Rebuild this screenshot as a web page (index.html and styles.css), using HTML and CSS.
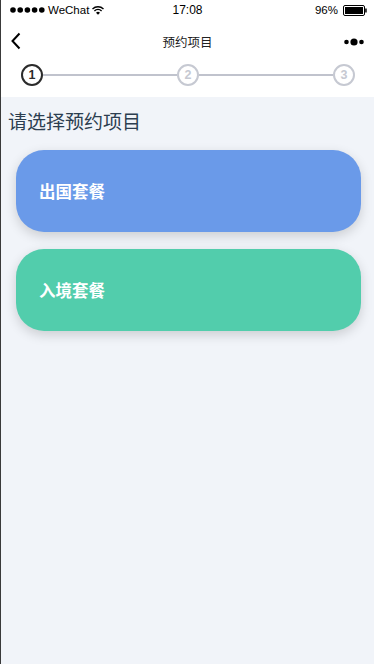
FILE: index.html
```html
<!DOCTYPE html>
<html lang="zh">
<head>
  <meta charset="UTF-8">
  <meta name="viewport" content="width=device-width, initial-scale=1.0">
  <title>预约项目</title>
  <link rel="stylesheet" href="styles.css">
</head>
<body>
  <div class="page">
    <div class="header">
      <div class="status-bar">
        <div class="status-left">
          <svg class="signal" width="35" height="6" viewBox="0 0 35 6">
            <circle cx="3" cy="3" r="2.8" fill="#000"/>
            <circle cx="10.2" cy="3" r="2.8" fill="#000"/>
            <circle cx="17.4" cy="3" r="2.8" fill="#000"/>
            <circle cx="24.6" cy="3" r="2.8" fill="#000"/>
            <circle cx="31.8" cy="3" r="2.8" fill="#000"/>
          </svg>
          <span>WeChat</span>
          <svg class="wifi" width="12" height="9" viewBox="0 0 12 9">
            <path d="M0.5 3 A8 8 0 0 1 11.5 3" fill="none" stroke="#000" stroke-width="1.4"/>
            <path d="M2.4 5 A5.2 5.2 0 0 1 9.6 5" fill="none" stroke="#000" stroke-width="1.4"/>
            <path d="M6 8.8 L4 6.8 A2.8 2.8 0 0 1 8 6.8 Z" fill="#000"/>
          </svg>
        </div>
        <div class="status-time">17:08</div>
        <div class="status-right">
          <span>96%</span>
          <svg class="battery" width="24" height="11" viewBox="0 0 24 11">
            <rect x="0.5" y="0.5" width="21" height="10" rx="1.5" fill="none" stroke="#000"/>
            <rect x="2" y="2" width="18" height="7" fill="#000"/>
            <rect x="22.2" y="3.5" width="1.5" height="4" fill="#000"/>
          </svg>
        </div>
      </div>
      <div class="nav-bar">
        <svg class="nav-back" width="12" height="18" viewBox="0 0 12 18">
          <path d="M9.5 1.5 L2.5 9 L9.5 16.5" fill="none" stroke="#000" stroke-width="2"/>
        </svg>
        <div class="nav-title">预约项目</div>
        <svg class="nav-more" width="20" height="8" viewBox="0 0 20 8">
          <circle cx="2.5" cy="4" r="2.3" fill="#000"/>
          <circle cx="10" cy="4" r="3.6" fill="#000"/>
          <circle cx="17.5" cy="4" r="2.3" fill="#000"/>
        </svg>
      </div>
      <div class="steps">
        <div class="step active">1</div>
        <div class="step-line"></div>
        <div class="step">2</div>
        <div class="step-line"></div>
        <div class="step">3</div>
      </div>
    </div>
    <div class="content">
      <h2 class="title">请选择预约项目</h2>
      <div class="card card-out">出国套餐</div>
      <div class="card card-in">入境套餐</div>
    </div>
  </div>
</body>
</html>
```

FILE: styles.css
```css
body {
  margin: 0;
  padding: 0;
  font-family: "Liberation Sans", "Noto Sans CJK SC", sans-serif;
}

.page {
  min-height: 664px;
  border-left: 1px solid #3a3a3a;
  background-color: #f1f4f9;
  display: flex;
  flex-direction: column;
}

.header {
  background-color: #fff;
}

.status-bar {
  height: 20px;
  display: flex;
  align-items: center;
  justify-content: space-between;
  padding: 0 7px 0 9px;
  font-size: 11.5px;
  color: #000;
  position: relative;
}

.status-left {
  display: flex;
  align-items: center;
  gap: 3px;
}

.status-time {
  position: absolute;
  left: 0;
  right: 0;
  text-align: center;
  font-size: 12px;
  pointer-events: none;
}

.status-right {
  display: flex;
  align-items: center;
  gap: 5px;
}

.nav-bar {
  height: 42px;
  display: flex;
  align-items: center;
  justify-content: space-between;
  padding: 0 10px 0 9px;
  position: relative;
}

.nav-title {
  position: absolute;
  left: 0;
  right: 0;
  text-align: center;
  font-size: 12.5px;
  color: #222;
}

.nav-more {
  margin-top: 1px;
}

.steps {
  display: flex;
  align-items: center;
  padding: 2px 19px 11px 20px;
}

.step {
  width: 18px;
  height: 18px;
  border: 2px solid #c6c9d2;
  border-radius: 50%;
  display: flex;
  align-items: center;
  justify-content: center;
  font-size: 12.5px;
  font-weight: bold;
  color: #c6c9d2;
  flex-shrink: 0;
}

.step.active {
  border-color: #2b2b2b;
  color: #2b2b2b;
}

.step-line {
  flex: 1;
  height: 2px;
  background-color: #c0c3cd;
}

.content {
  flex: 1;
  padding: 13px 13px 0 7px;
}

.title {
  margin: 0 0 14px 0;
  font-size: 19px;
  line-height: 26px;
  font-weight: normal;
  color: #2c3e50;
}

.card {
  margin: 0 0 17px 8px;
  height: 82px;
  border-radius: 28px;
  display: flex;
  align-items: center;
  padding-left: 23px;
  font-size: 16.5px;
  font-weight: bold;
  color: #fff;
  box-shadow: 0 4px 12px rgba(0, 0, 0, 0.16);
}

.card-out {
  background-color: #6a9ae9;
}

.card-in {
  background-color: #52cdac;
}
```
